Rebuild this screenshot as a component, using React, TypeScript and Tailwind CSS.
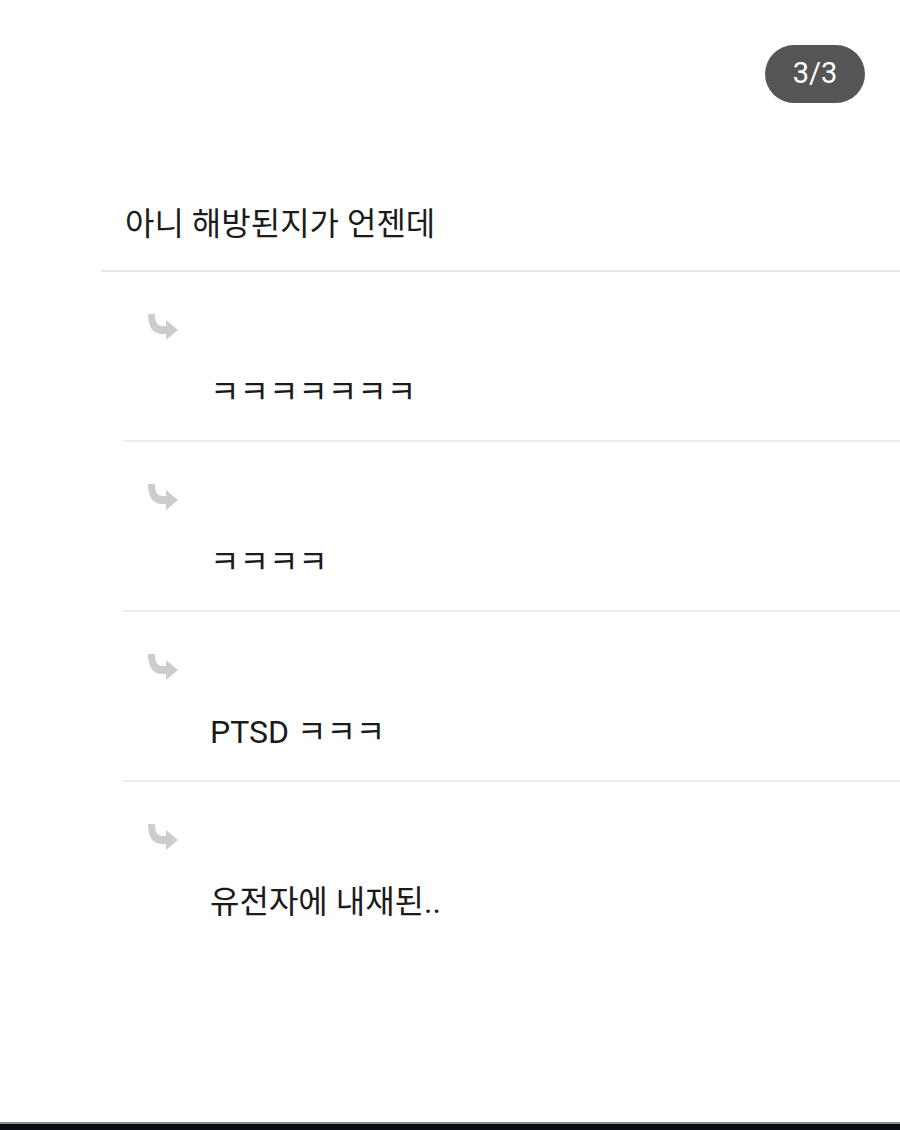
import React from "react";

const Arrow = () => (
  <svg width="34" height="28" viewBox="0 0 34 28" className="block">
    <path
      d="M2 1 L9 1 C9 9 11 13 17 13 L20 13 L20 7 L32 17 L20 27 L20 21 L16 21 C7 21 2 14 2 1 Z"
      fill="#cdcdcd"
    />
  </svg>
);

const replies = ["ㅋㅋㅋㅋㅋㅋㅋ", "ㅋㅋㅋㅋ", "PTSD ㅋㅋㅋ", "유전자에 내재된.."];

export default function App() {
  return (
    <div
      className="w-[900px] h-[1130px] bg-white flex flex-col overflow-hidden"
      style={{ fontFamily: "Roboto, 'Noto Sans CJK KR', sans-serif" }}
    >
      <div className="flex justify-end pt-[45px] pr-[35px]">
        <div className="w-[100px] h-[58px] rounded-full bg-[#555555] text-white text-[29px] flex items-center justify-center">
          3/3
        </div>
      </div>
      <div className="flex-1 pl-[101px]">
        <div className="h-[169px] flex items-end pb-[26px] pl-[24px] text-[32px] leading-[40px] text-[#1b1b1b] border-b-2 border-[#e8e8e8]">
          아니 해방된지가 언젠데
        </div>
        <div className="pl-[22px]">
          {replies.map((r, i) => (
            <div
              key={i}
              className={`h-[170px] pt-[41px] ${i < replies.length - 1 ? "border-b-2 border-[#ededed]" : ""}`}
            >
              <div className="pl-[23px]">
                <Arrow />
              </div>
              <div className="pl-[87px] mt-[31px] text-[32px] leading-[40px] text-[#1b1b1b]">
                {r}
              </div>
            </div>
          ))}
        </div>
      </div>
      <div className="h-[2px] bg-[#8a8a8a]" />
      <div className="h-[6px] bg-[#0b0d14]" />
    </div>
  );
}
